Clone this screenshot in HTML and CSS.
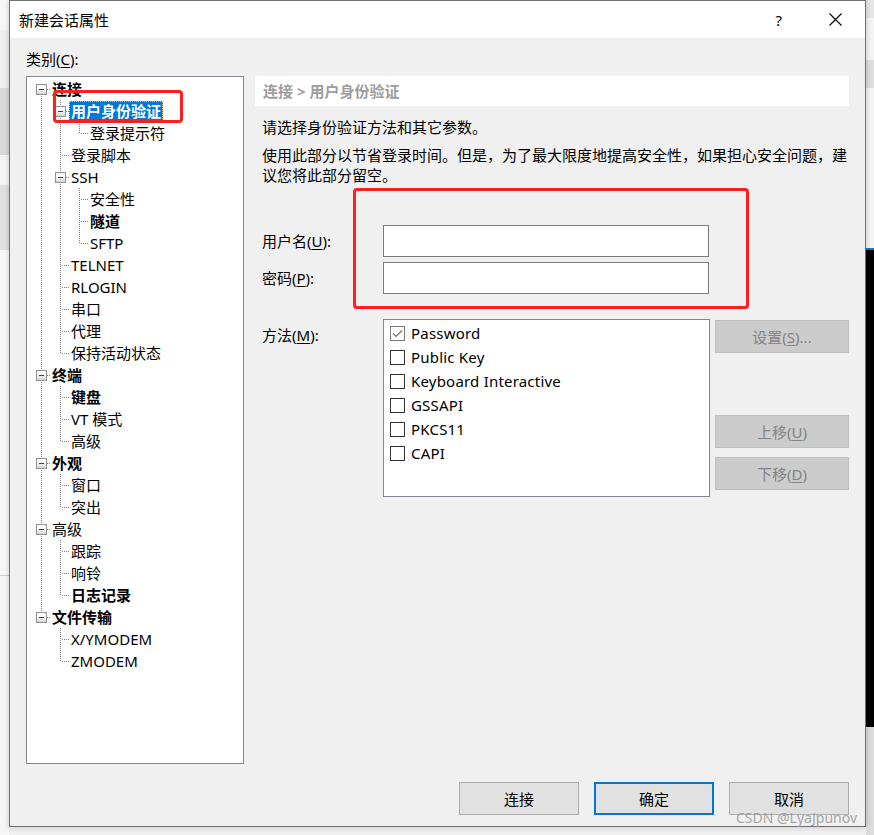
FILE: index.html
```html
<!DOCTYPE html>
<html lang="zh-CN">
<head>
	<meta charset="UTF-8">
	<title>新建会话属性</title>
	<link rel="stylesheet" href="styles.css">
</head>
<body>
	<div class="dialog">
		<div class="titlebar">
			<span class="title">新建会话属性</span>
			<span class="help">?</span>
			<svg class="close" width="13" height="13" viewBox="0 0 13 13"><path d="M0.5 0.5L12.5 12.5M12.5 0.5L0.5 12.5" stroke="#000" stroke-width="1.1" fill="none"/></svg>
		</div>
		<div class="content">
			<div class="cat-label">类别(<u>C</u>):</div>
			<div class="main">
				<div class="tree">
					<div class="row"><span class="g d"><i class="exp"></i></span><span class="lbl b">连接</span></div>
					<div class="row"><span class="g v"></span><span class="g t"><i class="exp"></i></span><span class="lbl b sel">用户身份验证</span></div>
					<div class="row"><span class="g v"></span><span class="g v"></span><span class="g l"></span><span class="lbl">登录提示符</span></div>
					<div class="row"><span class="g v"></span><span class="g t"></span><span class="lbl">登录脚本</span></div>
					<div class="row"><span class="g v"></span><span class="g t"><i class="exp"></i></span><span class="lbl">SSH</span></div>
					<div class="row"><span class="g v"></span><span class="g v"></span><span class="g t"></span><span class="lbl">安全性</span></div>
					<div class="row"><span class="g v"></span><span class="g v"></span><span class="g t"></span><span class="lbl b">隧道</span></div>
					<div class="row"><span class="g v"></span><span class="g v"></span><span class="g l"></span><span class="lbl">SFTP</span></div>
					<div class="row"><span class="g v"></span><span class="g t"></span><span class="lbl">TELNET</span></div>
					<div class="row"><span class="g v"></span><span class="g t"></span><span class="lbl">RLOGIN</span></div>
					<div class="row"><span class="g v"></span><span class="g t"></span><span class="lbl">串口</span></div>
					<div class="row"><span class="g v"></span><span class="g t"></span><span class="lbl">代理</span></div>
					<div class="row"><span class="g v"></span><span class="g l"></span><span class="lbl">保持活动状态</span></div>
					<div class="row"><span class="g t"><i class="exp"></i></span><span class="lbl b">终端</span></div>
					<div class="row"><span class="g v"></span><span class="g t"></span><span class="lbl b">键盘</span></div>
					<div class="row"><span class="g v"></span><span class="g t"></span><span class="lbl">VT 模式</span></div>
					<div class="row"><span class="g v"></span><span class="g l"></span><span class="lbl">高级</span></div>
					<div class="row"><span class="g t"><i class="exp"></i></span><span class="lbl b">外观</span></div>
					<div class="row"><span class="g v"></span><span class="g t"></span><span class="lbl">窗口</span></div>
					<div class="row"><span class="g v"></span><span class="g l"></span><span class="lbl">突出</span></div>
					<div class="row"><span class="g t"><i class="exp"></i></span><span class="lbl">高级</span></div>
					<div class="row"><span class="g v"></span><span class="g t"></span><span class="lbl">跟踪</span></div>
					<div class="row"><span class="g v"></span><span class="g t"></span><span class="lbl">响铃</span></div>
					<div class="row"><span class="g v"></span><span class="g l"></span><span class="lbl b">日志记录</span></div>
					<div class="row"><span class="g l"><i class="exp"></i></span><span class="lbl b">文件传输</span></div>
					<div class="row"><span class="g"></span><span class="g t"></span><span class="lbl">X/YMODEM</span></div>
					<div class="row"><span class="g"></span><span class="g l"></span><span class="lbl">ZMODEM</span></div>
				</div>
				<div class="panel">
					<div class="crumb">连接 &gt; 用户身份验证</div>
					<p class="desc">请选择身份验证方法和其它参数。</p>
					<p class="desc2">使用此部分以节省登录时间。但是，为了最大限度地提高安全性，如果担心安全问题，建议您将此部分留空。</p>
					<div class="field user">
						<label>用户名(<u>U</u>):</label>
						<input class="text" type="text">
					</div>
					<div class="field pwd">
						<label>密码(<u>P</u>):</label>
						<input class="text" type="password">
					</div>
					<div class="method">
						<label>方法(<u>M</u>):</label>
						<div class="list">
							<div class="opt"><span class="box on"><svg width="13" height="13" viewBox="0 0 13 13"><path d="M2 6.5L5 9.5L11 3.5" stroke="#6e6e6e" stroke-width="1.2" fill="none"/></svg></span>Password</div>
							<div class="opt"><span class="box"></span>Public Key</div>
							<div class="opt"><span class="box"></span>Keyboard Interactive</div>
							<div class="opt"><span class="box"></span>GSSAPI</div>
							<div class="opt"><span class="box"></span>PKCS11</div>
							<div class="opt"><span class="box"></span>CAPI</div>
						</div>
						<div class="side">
							<button class="btn dis setup">设置(<u>S</u>)...</button>
							<button class="btn dis up">上移(<u>U</u>)</button>
							<button class="btn dis down">下移(<u>D</u>)</button>
						</div>
					</div>
				</div>
			</div>
			<div class="footer">
				<button class="btn">连接</button>
				<button class="btn def">确定</button>
				<button class="btn">取消</button>
			</div>
		</div>
		<div class="mark mark-tree"></div>
		<div class="mark mark-form"></div>
		<div class="watermark">CSDN @LyaJpunov</div>
	</div>
</body>
</html>
```

FILE: styles.css
```css
*{margin:0; padding:0; box-sizing:border-box;}
html,body{height:835px; overflow:hidden;}
body{
	font-family:"Noto Sans","Noto Sans CJK SC",sans-serif;
	font-size:15px;
	color:#000;
	background:
		linear-gradient(to bottom,#e6e6e6 0 18px,#f4f4f4 18px 60px,#dedede 60px 88px,#f4f4f4 88px 248px,#1a73c8 248px 250px,#000 250px 727px,#dcdcdc 727px) right top/8px 100% no-repeat,
		linear-gradient(to bottom,#f7f7f7 0 30px,#eeeeee 30px 88px,#d9d9d9 88px 155px,#f5f5f5 155px 185px,#e1e1e1 185px 250px,#f8f8f8 250px 575px,#cfcfcf 575px 576px,#f6f6f6 576px) left top/9px 100% no-repeat,
		#f0f0f0;
}
u{text-decoration:underline; text-underline-offset:2px;}

.dialog{
	position:relative;
	width:857px;
	height:827px;
	margin-left:9px;
	border:1px solid #6f6f6f;
	background:#f0f0f0;
	display:flex;
	flex-direction:column;
	box-shadow:0 0 6px rgba(0,0,0,.2);
}
.titlebar{
	height:37px;
	background:#fff;
	display:flex;
	align-items:center;
	padding-left:9px;
}
.title{flex:1; line-height:20px;}
.help{margin-right:47px; line-height:20px;}
.close{margin-right:23px;}

.content{
	flex:1;
	padding:11px 16px 0 16px;
}
.cat-label{line-height:20px; margin-bottom:7px;}
.main{display:flex; gap:11px; height:688px;}

/* tree */
.tree{
	width:218px;
	border:1px solid #828790;
	background:#fff;
	padding:1px 0 0 4px;
}
.row{display:flex; height:22px; align-items:center;}
.g{width:19px; height:22px; flex-shrink:0;}
.v{background:repeating-linear-gradient(to bottom,#808080 0 1px,transparent 1px 2px) 10px 0/1px 100% no-repeat;}
.t{
	background:
		repeating-linear-gradient(to bottom,#808080 0 1px,transparent 1px 2px) 10px 0/1px 100% no-repeat,
		repeating-linear-gradient(to right,#808080 0 1px,transparent 1px 2px) 12px 11px/7px 1px no-repeat;
}
.l{
	background:
		repeating-linear-gradient(to bottom,#808080 0 1px,transparent 1px 2px) 10px 0/1px 12px no-repeat,
		repeating-linear-gradient(to right,#808080 0 1px,transparent 1px 2px) 12px 11px/7px 1px no-repeat;
}
.d{
	background:
		repeating-linear-gradient(to bottom,#808080 0 1px,transparent 1px 2px) 10px 12px/1px 10px no-repeat,
		repeating-linear-gradient(to right,#808080 0 1px,transparent 1px 2px) 12px 11px/7px 1px no-repeat;
}
.exp{
	display:flex;
	align-items:center;
	justify-content:center;
	width:11px;
	height:11px;
	margin:6px 0 0 5px;
	border:1px solid #919191;
	background:linear-gradient(#fff 30%,#d4d4d4);
}
.exp::before{content:""; width:5px; height:1px; background:#1f3f86;}
.lbl{padding:0 2px; height:20px; line-height:20px; white-space:nowrap;}
.lbl.b{font-weight:bold;}
.lbl.sel{background:#0078d7; color:#fff; outline:1px dotted #e8c070; outline-offset:-1px;}

/* right panel */
.panel{width:594px; display:flex; flex-direction:column;}
.crumb{
	height:30px;
	line-height:30px;
	background:#fff;
	color:#9d9d9d;
	font-weight:bold;
	padding-left:8px;
}
.desc{margin-top:11px; padding-left:7px; line-height:20px;}
.desc2{margin-top:8px; padding-left:7px; line-height:20px;}
.field{display:flex; align-items:center; padding-left:7px;}
.field label,.method label{width:121px; line-height:20px; flex-shrink:0;}
.user{margin-top:40px;}
.pwd{margin-top:5px;}
.text{
	width:326px;
	height:32px;
	border:1px solid #7a7a7a;
	background:#fff;
	outline:none;
}
.method{display:flex; margin-top:25px; padding-left:7px;}
.method label{padding-top:6px;}
.list{
	width:327px;
	height:178px;
	border:1px solid #828790;
	background:#fff;
	padding:1px 0 0 6px;
}
.opt{display:flex; align-items:center; gap:6px; height:24px; line-height:20px; letter-spacing:.2px;}
.box{
	display:flex;
	align-items:center;
	justify-content:center;
	width:15px;
	height:15px;
	border:1px solid #333;
	background:#fff;
}
.box.on{border-color:#777;}
.side{margin-left:5px; width:134px; display:flex; flex-direction:column;}

.btn{
	height:33px;
	border:1px solid #adadad;
	background:#e1e1e1;
	font:inherit;
	color:#000;
	line-height:20px;
}
.btn.dis{background:#cccccc; border-color:#bfbfbf; color:#838383;}
.setup{margin-top:1px;}
.up{margin-top:62px;}
.down{margin-top:9px;}

.footer{display:flex; justify-content:flex-end; gap:15px; margin-top:18px;}
.footer .btn{width:120px;}
.btn.def{border:2px solid #0078d7;}

/* annotations over the screenshot */
.mark{
	position:absolute;
	border:3px solid #ff1f1f;
	border-radius:4px;
}
.mark-tree{left:43px; top:89px; width:130px; height:33px;}
.mark-form{left:343px; top:187px; width:396px; height:121px;}
.watermark{
	position:absolute;
	left:726px;
	top:807px;
	font-size:14px;
	line-height:20px;
	color:rgba(150,150,150,.85);
	white-space:nowrap;
}
```
